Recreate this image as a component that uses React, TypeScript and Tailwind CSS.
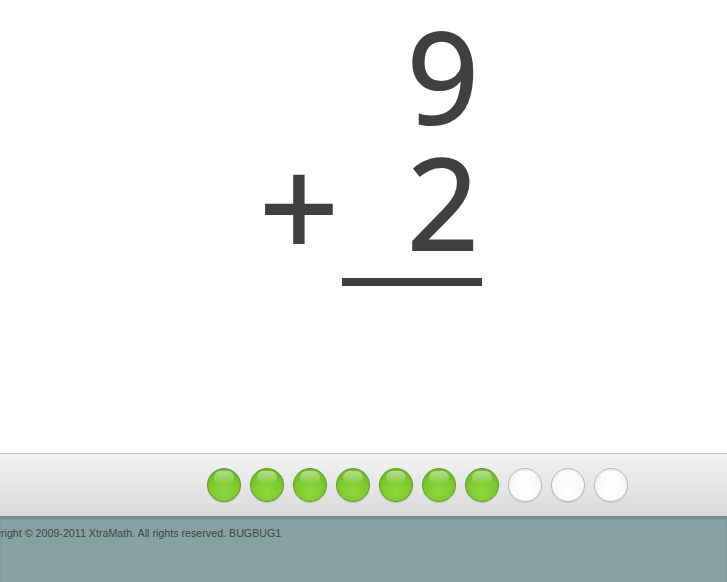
const DOTS = [true, true, true, true, true, true, true, false, false, false];

function Dot({ done }: { done: boolean }) {
  return done ? (
    <span className="relative block h-[34px] w-[34px] rounded-full border border-[#5e9c25] bg-[radial-gradient(circle_at_50%_70%,#8fd83c_0%,#7cc630_55%,#64ab22_100%)] shadow-[0_1px_1px_rgba(0,0,0,0.15)]">
      <span className="absolute left-[6px] top-[2px] h-[13px] w-[20px] rounded-full bg-gradient-to-b from-[rgba(255,255,255,0.5)] to-[rgba(255,255,255,0)]" />
    </span>
  ) : (
    <span className="relative block h-[34px] w-[34px] rounded-full border border-[#b9b9b9] bg-[radial-gradient(circle_at_50%_70%,#ffffff_0%,#f7f7f7_60%,#e6e6e6_100%)] shadow-[0_1px_1px_rgba(0,0,0,0.1)]">
      <span className="absolute left-[6px] top-[2px] h-[13px] w-[20px] rounded-full bg-gradient-to-b from-[rgba(255,255,255,0.9)] to-[rgba(255,255,255,0)]" />
    </span>
  );
}

export default function App() {
  return (
    <div className="flex h-[582px] w-[727px] flex-col overflow-hidden bg-white">
      {/* problem */}
      <div className="h-[453px] font-['Open_Sans',sans-serif] font-normal text-[#404040] [-webkit-text-stroke:2px_#404040]">
        <div className="ml-[259px] mt-[12px] w-[225px]">
          <div className="flex h-[126px] justify-end pr-[5px] text-[126px] leading-[126px]">9</div>
          <div className="flex h-[126px] items-start justify-between pr-[5px] text-[126px] leading-[126px]">
            <span className="mt-[4px] text-[140px]">+</span>
            <span>2</span>
          </div>
          <div className="ml-[83px] mt-[14px] h-[8px] w-[140px] bg-[#404040]" />
        </div>
      </div>

      {/* progress bar */}
      <div className="flex h-[63px] items-center border-t border-[#c2c2c2] bg-gradient-to-b from-[#f3f3f3] to-[#dadada] pl-[207px]">
        <div className="flex gap-[9px]">
          {DOTS.map((d, i) => (
            <Dot key={i} done={d} />
          ))}
        </div>
      </div>

      {/* footer */}
      <div className="flex-1 bg-[#88a2a2] shadow-[inset_0_3px_3px_rgba(0,0,0,0.15)]">
        <p className="-ml-[24px] mt-[9px] whitespace-nowrap font-['Liberation_Sans',sans-serif] text-[10.7px] text-[#3b4747]">
          Copyright © 2009-2011 XtraMath. All rights reserved. BUGBUG1
        </p>
      </div>
    </div>
  );
}
